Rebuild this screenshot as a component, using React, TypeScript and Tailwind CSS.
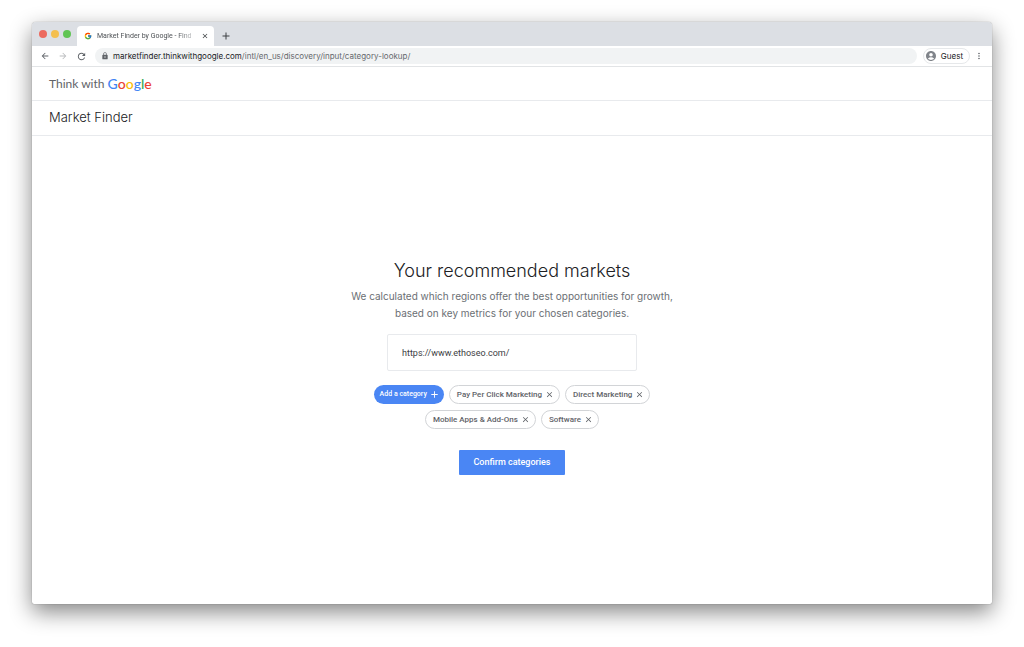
import { useState } from "react";
import { FcGoogle } from "react-icons/fc";
import {
  MdAccountCircle,
  MdAdd,
  MdArrowBack,
  MdArrowForward,
  MdClose,
  MdLock,
  MdMoreVert,
  MdRefresh,
} from "react-icons/md";

const initialCategories = [
  "Pay Per Click Marketing",
  "Direct Marketing",
  "Mobile Apps & Add-Ons",
  "Software",
];

function TabStrip() {
  return (
    <div className="flex h-6 shrink-0 items-end rounded-t bg-[#dcdfe4]">
      <div className="flex h-6 items-center gap-1 pl-[7px]">
        <span className="size-2 rounded-full bg-[#ec6a5e]" />
        <span className="size-2 rounded-full bg-[#f4bf4f]" />
        <span className="size-2 rounded-full bg-[#61c554]" />
      </div>
      <div className="ml-1.5 flex h-5 w-[137px] items-center rounded-t bg-white pr-[5px] pl-[7px]">
        <FcGoogle className="size-2 shrink-0" />
        <span className="ml-[5px] bg-linear-to-r from-[#45494d] from-85% to-[#c4c6c8] bg-clip-text text-[7px] whitespace-nowrap text-transparent">
          Market Finder by Google - Find
        </span>
        <button type="button" aria-label="Close tab" className="ml-auto shrink-0 text-[#3c4043]">
          <MdClose className="size-2" />
        </button>
      </div>
      <button type="button" aria-label="New tab" className="mb-1 ml-1.5 text-[#3c4043]">
        <MdAdd className="size-3" />
      </button>
    </div>
  );
}

function Toolbar() {
  return (
    <div className="flex h-[21px] shrink-0 items-center border-b border-[#e2e4e6] bg-white px-2">
      <div className="flex items-center gap-2 text-[#5f6368]">
        <button type="button" aria-label="Back">
          <MdArrowBack className="size-2.5" />
        </button>
        <button type="button" aria-label="Forward" className="text-[#babcbe]">
          <MdArrowForward className="size-2.5" />
        </button>
        <button type="button" aria-label="Reload">
          <MdRefresh className="size-[11px]" />
        </button>
      </div>
      <div className="ml-2 flex h-4 flex-1 items-center rounded-full bg-[#f1f3f4] pl-1.5">
        <MdLock className="size-2 text-[#5f6368]" />
        <p className="ml-1 font-[Inter,sans-serif] text-[8px] text-[#66696d]">
          <span className="text-[#202124]">marketfinder.thinkwithgoogle.com</span>
          /intl/en_us/discovery/input/category-lookup/
        </p>
      </div>
      <button
        type="button"
        className="ml-1.5 flex h-4 items-center gap-1 rounded-full border border-[#e6e8ea] pr-1.5 pl-px font-[Inter,sans-serif] text-[8px] text-[#202124]"
      >
        <MdAccountCircle className="size-3 text-[#80848a]" />
        Guest
      </button>
      <button type="button" aria-label="Menu" className="ml-1 text-[#5f6368]">
        <MdMoreVert className="size-2.5" />
      </button>
    </div>
  );
}

function BrandBar() {
  return (
    <header>
      <div className="flex h-[34px] items-center border-b border-[#e8eaed] px-[17px]">
        <a
          href="#home"
          className="flex items-center gap-[3px] font-[Lato,sans-serif] text-[12px] text-[#5f6368]"
        >
          <span>Think with</span>
          <span className="flex text-[14px] font-medium text-[#4285f4]">
            G<span className="text-[#ea4335]">o</span>
            <span className="text-[#fbbc04]">o</span>g
            <span className="text-[#34a853]">l</span>
            <span className="text-[#ea4335]">e</span>
          </span>
        </a>
      </div>
      <div className="flex h-[35px] items-center border-b border-[#e8eaed] px-[17px]">
        <p className="text-[13px] font-light text-[#202124]">Market Finder</p>
      </div>
    </header>
  );
}

export default function App() {
  const [categories, setCategories] = useState(initialCategories);
  const [site, setSite] = useState("https://www.ethoseo.com/");

  return (
    <div className="flex min-h-screen flex-col bg-white px-8 pt-[22px] pb-[43px] font-[Roboto,sans-serif]">
      <div className="flex flex-1 flex-col rounded-t rounded-b-xs bg-white shadow-[0_0_1px_rgba(0,0,0,0.5),0_8px_22px_rgba(0,0,0,0.48)]">
        <TabStrip />
        <Toolbar />
        <div className="flex flex-1 flex-col font-[Inter,sans-serif]">
          <BrandBar />
          <main className="flex flex-1 flex-col items-center justify-center pb-1.5">
            <h1 className="text-[18px] leading-6 font-light text-[#202124]">
              Your recommended markets
            </h1>
            <p className="mt-[5px] w-[340px] text-center text-[10px] leading-[17px] text-[#6b6f74]">
              We calculated which regions offer the best opportunities for growth, based on key
              metrics for your chosen categories.
            </p>
            <input
              type="url"
              aria-label="Website address"
              value={site}
              onChange={(event) => setSite(event.target.value)}
              className="mt-3 h-[37px] w-[250px] rounded-xs border border-[#e8eaed] px-3.5 font-[Roboto,sans-serif] text-[9px] text-[#3c4043] outline-none"
            />
            <div className="mt-3.5 flex w-[300px] flex-wrap justify-center gap-x-[5px] gap-y-1.5 font-[Roboto,sans-serif]">
              <button
                type="button"
                className="flex h-[19px] items-center gap-0.5 rounded-full bg-[#4a86f4] pr-1 pl-1.5 text-[7px] font-medium text-white"
              >
                Add a category
                <MdAdd className="size-[11px]" />
              </button>
              {categories.map((category) => (
                <span
                  key={category}
                  className="flex h-[19px] items-center gap-[3px] rounded-full border border-[#d2d4d7] pr-[5px] pl-[7px] text-[8px] font-medium text-[#5f6368]"
                >
                  {category}
                  <button
                    type="button"
                    aria-label={`Remove ${category}`}
                    onClick={() => setCategories(categories.filter((item) => item !== category))}
                  >
                    <MdClose className="size-[9px]" />
                  </button>
                </span>
              ))}
            </div>
            <button
              type="button"
              className="mt-[21px] h-[25px] rounded-[1px] bg-[#4a86f4] px-3.5 font-[Roboto,sans-serif] text-[9px] font-medium text-white"
            >
              Confirm categories
            </button>
          </main>
        </div>
      </div>
    </div>
  );
}
